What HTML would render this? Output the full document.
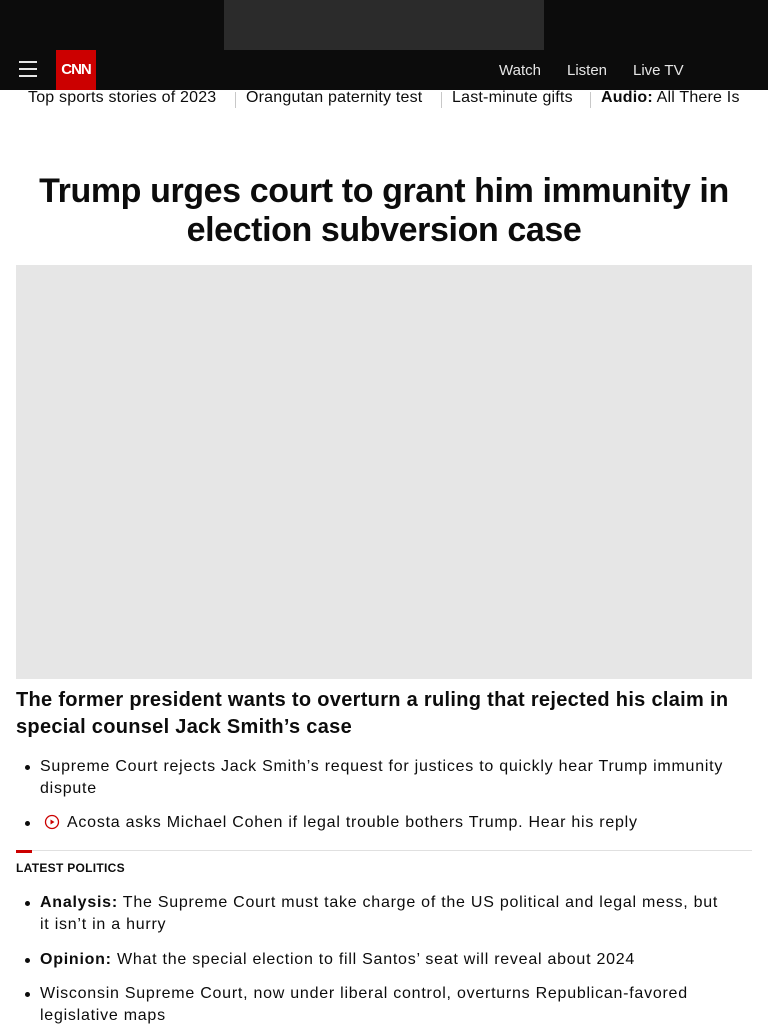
<!DOCTYPE html>
<html><head><meta charset="utf-8"><style>
*{margin:0;padding:0;box-sizing:border-box}
body{width:768px;height:1024px;overflow:hidden;background:#fff;font-family:"Liberation Sans",sans-serif;color:#0c0c0c}
.top{position:absolute;left:0;top:0;width:768px;height:90px;background:#0c0c0c}
.ad{position:absolute;left:224px;top:0;width:320px;height:50px;background:#2b2b2b}
.burg{position:absolute;left:19px;top:61px;width:18px}
.burg i{display:block;height:2px;background:#e6e6e6;margin-bottom:5px}
.logo{position:absolute;left:56px;top:50px;width:40px;height:40px;background:#cc0000;color:#fff;font-weight:bold;font-size:15px;text-align:center;line-height:40px;letter-spacing:-1px}
.nav{position:absolute;top:62px;color:#e6e6e6;font-size:15px}
.sub{position:absolute;top:89px;left:0;width:768px;font-size:16px;white-space:nowrap}
.sub span{position:absolute;top:0;letter-spacing:0.2px}
.sep{position:absolute;top:92px;width:1px;height:16px;background:#c8c8c8}
h1{position:absolute;top:172px;left:0;width:768px;text-align:center;font-size:34px;line-height:39px;font-weight:bold;letter-spacing:-0.4px}
.img{position:absolute;left:16px;top:265px;width:736px;height:414px;background:#e6e6e6}
h2{position:absolute;left:16px;top:687px;width:745px;font-size:20px;line-height:27px;font-weight:bold;letter-spacing:0.3px}
ul{list-style:none;position:absolute;left:0;width:768px}
li{position:relative;padding-left:40px;font-size:16px;line-height:22px;letter-spacing:0.75px;width:750px}
li:before{content:"";position:absolute;left:25px;top:9px;width:5px;height:5px;border-radius:50%;background:#0c0c0c}
.rule{position:absolute;left:16px;top:850px;width:736px;height:1px;background:#e0e0e0}
.red{position:absolute;left:16px;top:850px;width:16px;height:3px;background:#cc0000}
.lp{position:absolute;left:16px;top:861px;font-size:12px;font-weight:bold;letter-spacing:0.3px}
</style></head><body>
<div class="top"><div class="ad"></div>
<div class="burg"><i></i><i></i><i></i></div>
<div class="logo">CNN</div>
<div class="nav" style="left:499px">Watch</div>
<div class="nav" style="left:567px">Listen</div>
<div class="nav" style="left:633px">Live TV</div></div>
<div class="sub">
<span style="left:28px">Top sports stories of 2023</span>
<span style="left:246px">Orangutan paternity test</span>
<span style="left:452px">Last-minute gifts</span>
<span style="left:601px"><b>Audio:</b> All There Is</span></div>
<div class="sep" style="left:235px"></div><div class="sep" style="left:441px"></div><div class="sep" style="left:590px"></div>
<h1>Trump urges court to grant him immunity in<br>election subversion case</h1>
<div class="img"></div>
<h2>The former president wants to overturn a ruling that rejected his claim in special counsel Jack Smith’s case</h2>
<ul style="top:756px">
<li>Supreme Court rejects Jack Smith’s request for justices to quickly hear Trump immunity dispute</li>
<li style="margin-top:12px"><svg width="16" height="16" viewBox="0 0 16 16" style="vertical-align:-3px;margin:0 7px 0 4px"><circle cx="8" cy="8" r="6.5" fill="none" stroke="#cc0000" stroke-width="1.3"/><path d="M6.5 5.5L10.5 8L6.5 10.5Z" fill="#cc0000"/></svg>Acosta asks Michael Cohen if legal trouble bothers Trump. Hear his reply</li>
</ul>
<div class="rule"></div><div class="red"></div>
<div class="lp">LATEST POLITICS</div>
<ul style="top:892px">
<li style="width:730px"><b>Analysis:</b> The Supreme Court must take charge of the US political and legal mess, but it isn’t in a hurry</li>
<li style="margin-top:13px"><b>Opinion:</b> What the special election to fill Santos’ seat will reveal about 2024</li>
<li style="margin-top:12px;width:730px">Wisconsin Supreme Court, now under liberal control, overturns Republican-favored legislative maps</li>
</ul>
</body></html>
